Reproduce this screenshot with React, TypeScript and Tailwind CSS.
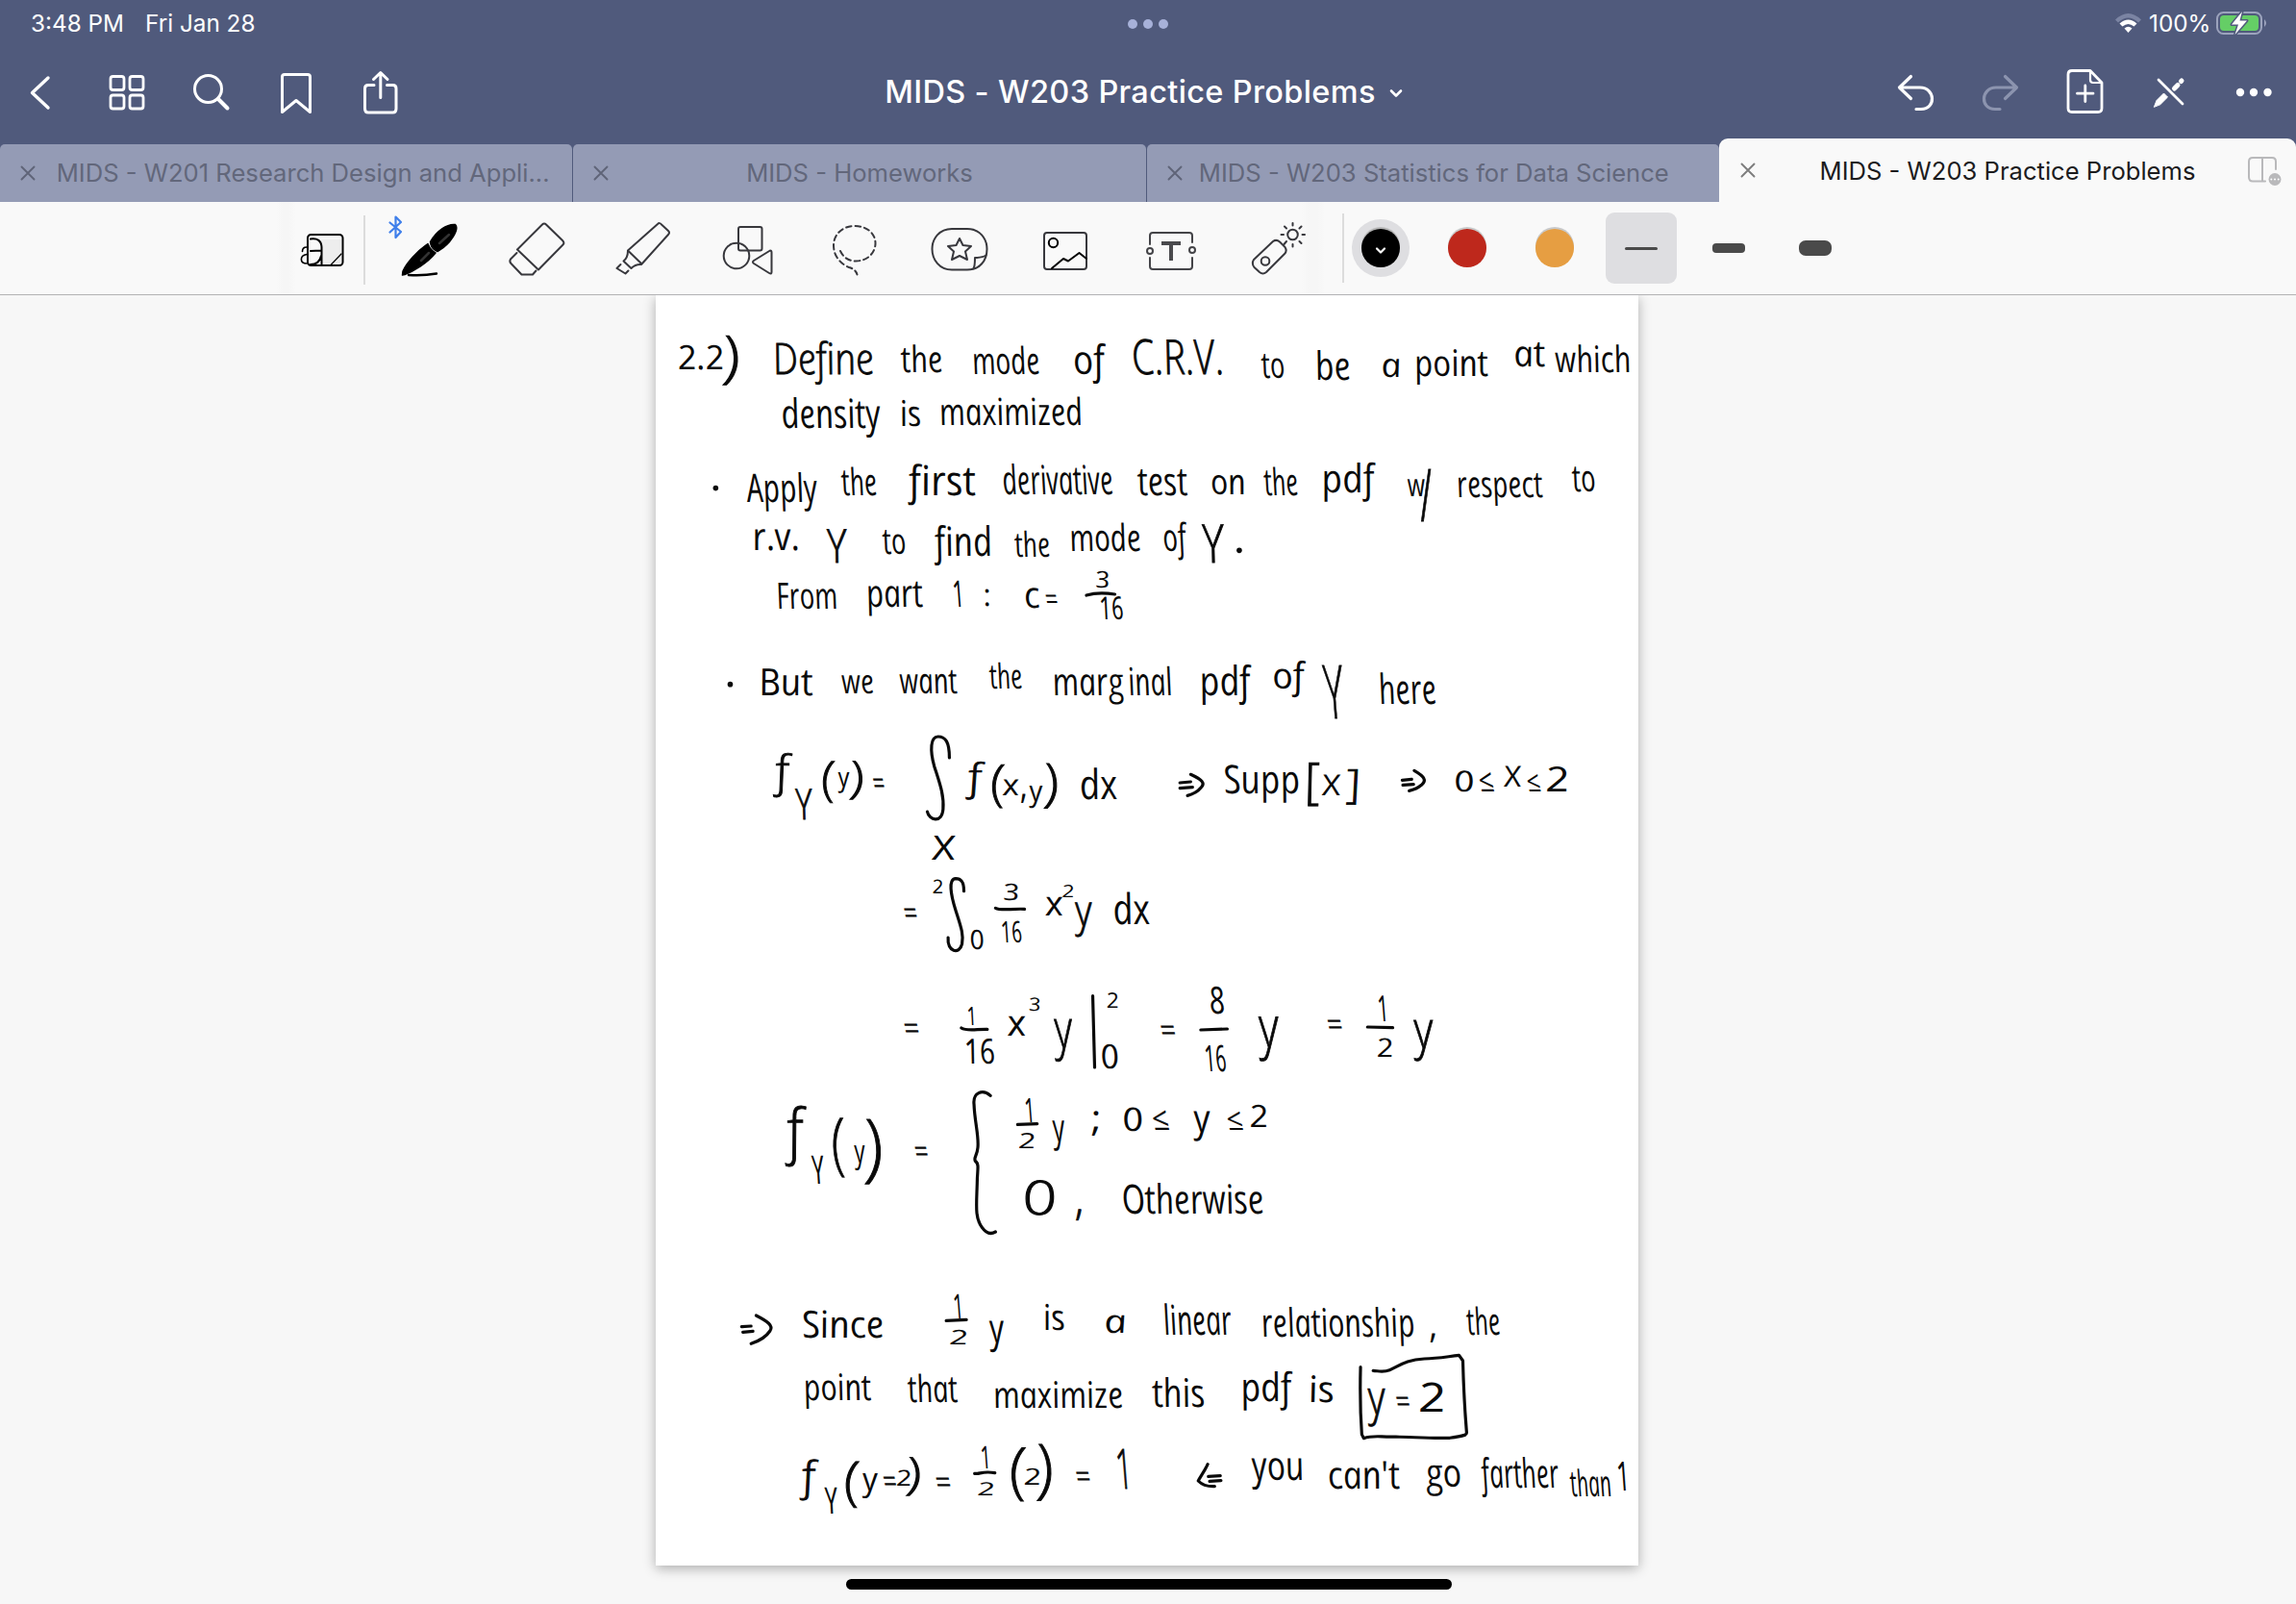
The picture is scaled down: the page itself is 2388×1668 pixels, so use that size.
import React from "react";

/* ---------- handwritten note ---------- */

// Ink is stored strip by strip. Inside a strip, 1568 units span 1030px across
// and 3 units make one pixel down.
const UX = 1030 / 1568;
const UY = 1 / 3;
const SHEET_X = 680;

// text, left, right, baseline, font size (px)
type Word = [string, number, number, number, number];
// text, left, right, top, bottom: stretched to fill the given height
type Tall = [string, number, number, number, number];

interface Strip {
  top: number;
  words: Word[];
  tall: Tall[];
  strokes: string[];
  dots: number[][];
}

const strips: Strip[] = [
  {
    top: 310,
    words: [
      ["2.2", 38, 112, 222, 35], ["Define", 190, 350, 238, 45], ["the", 392, 458, 232, 38],
      ["mode", 505, 612, 238, 39], ["of", 665, 715, 237, 42], ["C.R.V.", 758, 904, 238, 50],
      ["to", 963, 1000, 250, 38], ["be", 1048, 1104, 254, 41], ["a", 1152, 1184, 246, 35],
      ["point", 1205, 1322, 243, 38], ["at", 1362, 1412, 214, 38], ["which", 1428, 1548, 230, 38],
      ["density", 203, 360, 405, 42], ["is", 390, 424, 400, 37], ["maximized", 453, 680, 397, 39],
      ["Apply", 148, 260, 635, 41], ["the", 298, 354, 614, 39], ["first", 405, 511, 614, 43],
      ["derivative", 553, 728, 612, 42], ["test", 767, 846, 614, 41], ["on", 882, 938, 612, 37],
      ["the", 967, 1021, 614, 39], ["pdf", 1058, 1142, 606, 41], ["w", 1194, 1222, 618, 33],
      ["respect", 1272, 1408, 621, 38], ["to", 1455, 1492, 602, 39],
      ["r.v.", 157, 232, 785, 40], ["to", 363, 400, 797, 38], ["find", 446, 537, 803, 42],
      ["the", 572, 628, 808, 36], ["mode", 659, 772, 790, 39], ["of", 807, 844, 790, 40],
      ["From", 195, 292, 969, 38], ["part", 337, 427, 963, 40], [":", 522, 534, 960, 32],
      ["c", 587, 612, 965, 38], ["=", 620, 640, 972, 32], ["3", 698, 722, 902, 24],
      ["16", 706, 744, 1003, 33],
    ],
    tall: [
      [")", 112, 140, 118, 272], ["/", 1216, 1238, 535, 697], ["Y", 276, 307, 720, 824],
      ["Y", 871, 905, 705, 824], ["1", 474, 492, 880, 962],
    ],
    strokes: ["M685 927 C700 918 718 920 730 924"],
    dots: [[98, 593], [927, 787]],
  },
  {
    top: 660,
    words: [
      ["But", 167, 253, 190, 39], ["we", 298, 349, 182, 35], ["want", 390, 481, 182, 37],
      ["the", 532, 584, 168, 36], ["marg", 632, 745, 188, 40], ["inal", 752, 822, 188, 40],
      ["pdf", 865, 946, 189, 42], ["of", 980, 1031, 168, 38], ["here", 1149, 1240, 216, 43],
      ["=", 347, 366, 499, 34], [",", 580, 592, 510, 38], ["x", 552, 579, 500, 31],
      ["dx", 675, 735, 514, 43], ["Supp", 903, 1024, 495, 41], ["X", 1058, 1087, 500, 30],
      ["0", 1267, 1299, 488, 30], ["≤", 1306, 1330, 490, 33], ["X", 1346, 1373, 473, 30],
      ["≤", 1382, 1404, 490, 30], ["2", 1412, 1450, 490, 36], ["X", 441, 477, 702, 35],
      ["=", 396, 418, 902, 34], ["2", 440, 458, 808, 20], ["0", 500, 523, 980, 28],
      ["3", 552, 579, 828, 24], ["16", 550, 583, 960, 31], ["x", 620, 649, 875, 36],
      ["2", 645, 665, 820, 18], ["dx", 728, 787, 902, 44],
    ],
    tall: [
      ["Y", 1066, 1097, 97, 262], ["f", 194, 216, 370, 508], ["Y", 226, 252, 480, 575],
      ["(", 266, 288, 395, 525], ["y", 292, 310, 430, 495], [")", 312, 335, 395, 515],
      ["f", 499, 520, 397, 515], ["(", 534, 557, 405, 540], ["y", 595, 616, 470, 540],
      [")", 620, 644, 400, 540], ["[", 1032, 1056, 400, 535], ["]", 1098, 1120, 420, 530],
      ["y", 669, 695, 835, 942],
    ],
    strokes: [
      "M468 384 C468 335 462 318 450 318 C438 318 437 360 444 410 C452 460 460 500 458 545 C456 590 436 580 433 552",
      "M491 800 C491 770 486 761 478 761 C466 762 470 810 478 860 C486 910 491 935 488 965 C484 1000 464 990 466 945",
      "M833 462 L850 459 M833 479 L853 476 M850 436 C868 452 874 464 866 478 C862 488 853 498 845 502",
      "M1185 454 L1200 451 M1186 469 L1203 467 M1204 424 C1220 442 1224 454 1216 468 C1210 478 1203 484 1196 487",
      "M541 853 C550 862 566 854 587 856",
    ],
    dots: [[121, 155]],
  },
  {
    top: 1000,
    words: [
      ["=", 396, 421, 244, 34], ["x", 560, 590, 230, 38], ["3", 592, 612, 153, 19],
      ["16", 492, 541, 318, 36], ["2", 716, 736, 143, 22], ["0", 708, 737, 333, 35],
      ["=", 802, 827, 248, 34], ["8", 880, 905, 163, 39], ["16", 873, 907, 342, 38],
      ["=", 1066, 1091, 232, 34], ["2", 1144, 1171, 297, 27], ["=", 413, 435, 626, 34],
      ["2", 576, 604, 582, 22], [";", 693, 709, 528, 38], ["0", 742, 775, 528, 34],
      ["≤", 789, 816, 525, 34], ["≤", 907, 933, 524, 32], ["2", 943, 973, 517, 32],
      ["0", 585, 639, 790, 49], [",", 668, 682, 790, 46], ["Otherwise", 742, 967, 785, 42],
    ],
    tall: [
      ["1", 496, 511, 140, 197], ["y", 637, 665, 178, 310], ["y", 961, 992, 172, 310],
      ["1", 1147, 1164, 107, 187], ["y", 1206, 1236, 183, 310], ["f", 214, 240, 450, 640],
      ["Y", 252, 271, 605, 693], ["(", 284, 306, 487, 672], ["y", 318, 335, 572, 650],
      [")", 337, 368, 493, 695], ["1", 588, 604, 425, 500], ["y", 633, 652, 495, 590],
      ["y", 856, 882, 467, 560],
    ],
    strokes: [
      "M487 207 C495 218 512 210 528 211",
      "M695 107 L698 330",
      "M866 213 L908 210",
      "M1130 204 L1170 206",
      "M576 508 L607 506",
      "M533 418 C520 395 505 410 507 445 C508 500 515 545 513 580 C512 605 506 612 509 622 C516 632 512 650 512 690 C511 760 508 800 520 830 C527 850 535 850 541 843",
    ],
    dots: [],
  },
  {
    top: 1300,
    words: [
      ["Since", 235, 365, 274, 39], ["2", 467, 497, 293, 21], ["is", 617, 652, 250, 37],
      ["a", 713, 749, 259, 34], ["linear", 808, 916, 265, 43], ["relationship", 963, 1206, 270, 41],
      [",", 1228, 1241, 274, 38], ["the", 1288, 1341, 263, 39], ["point", 238, 345, 467, 38],
      ["that", 403, 482, 473, 39], ["maximize", 538, 744, 491, 38], ["this", 790, 874, 489, 41],
      ["pdf", 930, 1011, 472, 41], ["is", 1037, 1078, 473, 38], ["=", 1175, 1198, 508, 34],
      ["2", 1211, 1255, 505, 42], ["=", 363, 385, 755, 34], ["2", 383, 408, 736, 23],
      ["=", 446, 471, 760, 34], ["2", 511, 539, 765, 19], ["2", 585, 613, 732, 24],
      ["=", 668, 692, 740, 34], ["you", 948, 1031, 718, 42], ["can't", 1068, 1182, 745, 40],
      ["go", 1223, 1280, 738, 41], ["farther", 1312, 1434, 740, 42], ["than", 1452, 1517, 767, 38],
    ],
    tall: [
      ["1", 475, 491, 137, 213], ["y", 533, 556, 220, 318], ["y", 1133, 1160, 430, 548],
      ["f", 236, 257, 652, 780], ["Y", 272, 292, 740, 822], ["(", 302, 327, 658, 802],
      ["y", 331, 355, 695, 773], [")", 402, 426, 645, 765], ["1", 518, 534, 610, 680],
      ["(", 565, 592, 615, 782], [")", 609, 637, 605, 782], ["1", 734, 760, 622, 745],
      ["1", 1526, 1546, 660, 750],
    ],
    strokes: [
      "M139 239 L154 237 M141 256 L157 253 M162 204 C180 222 190 236 184 252 C178 270 166 284 154 292",
      "M463 220 L495 217",
      "M508 697 C516 700 520 688 540 695",
      "M877 668 C872 690 865 708 862 720 C868 732 876 738 888 737 M878 706 L897 704 M880 721 L898 719",
      "M1119 365 C1118 440 1119 520 1121 575 L1124 587 C1140 576 1150 584 1175 582 C1210 584 1230 588 1260 586 C1280 580 1287 578 1287 570 C1284 500 1282 420 1281 345 L1275 328 C1250 334 1240 338 1220 339 C1190 342 1180 362 1165 374 C1155 382 1148 377 1139 376",
    ],
    dots: [],
  },
];

const PEN = "'Open Sans', 'Noto Sans', 'DejaVu Sans', sans-serif";

// Height above and below the baseline, in em, of characters that get stretched.
function extent(ch: string): [number, number] {
  if (ch === "y") return [0.535, 0.24];
  if (ch === "f") return [0.77, 0.24];
  if ("()[]".includes(ch)) return [0.714, 0.16];
  return [0.714, 0];
}

function Written({ text, x, width, y, size }: { text: string; x: number; width: number; y: number; size: number }) {
  // Large and stretched marks use the light face, thickened to the pen's width.
  const light = size > 44 || text === "f" || text === "]" || text === "[";
  return (
    <text
      transform={`translate(${(x + 1.5).toFixed(1)} ${y.toFixed(1)}) skewX(11)`}
      fontSize={size}
      fontWeight={light ? 300 : 400}
      stroke={light ? "#0a0a0a" : "none"}
      strokeWidth={0.9}
      textLength={width}
      lengthAdjust="spacingAndGlyphs"
    >
      {text}
    </text>
  );
}

function Note() {
  return (
    <svg
      viewBox="682 308 1022 1320"
      className="block h-[1320px] w-[1022px] overflow-visible italic"
      fontFamily={PEN}
      fill="#0a0a0a"
    >
      {strips.map((s) => (
        <g key={s.top}>
          {s.words.map(([t, l, r, b, size], i) => (
            <Written key={i} text={t} x={SHEET_X + l * UX} width={(r - l) * UX} y={s.top + b * UY} size={size} />
          ))}
          {s.tall.map(([t, l, r, top, bottom], i) => {
            const [up, down] = extent(t);
            const size = ((bottom - top) * UY) / (up + down);
            return (
              <Written
                key={i}
                text={t}
                x={SHEET_X + l * UX}
                width={(r - l) * UX}
                y={s.top + bottom * UY - down * size}
                size={size}
              />
            );
          })}
          <g transform={`translate(${SHEET_X} ${s.top}) scale(${UX} ${UY})`}>
            {s.strokes.map((d, i) => (
              <path
                key={i}
                d={d}
                fill="none"
                stroke="#0a0a0a"
                strokeWidth={3.2}
                strokeLinecap="round"
                strokeLinejoin="round"
                vectorEffect="non-scaling-stroke"
              />
            ))}
          </g>
          {s.dots.map(([x, y], i) => (
            <circle key={i} cx={SHEET_X + x * UX} cy={s.top + y * UY} r={2.8} />
          ))}
        </g>
      ))}
    </svg>
  );
}

/* ---------- chrome ---------- */

// An icon slot. Every drawing shares the screen's coordinate grid.
function Slot({
  x, y, w, h, className, children, stroke = "#fff", sw = 3,
}: {
  x: number; y: number; w: number; h: number; className?: string; children: React.ReactNode; stroke?: string; sw?: number;
}) {
  return (
    <svg
      width={w}
      height={h}
      viewBox={`${x} ${y} ${w} ${h}`}
      className={`block shrink-0 ${className ?? ""}`}
      fill="none"
      stroke={stroke}
      strokeWidth={sw}
      strokeLinecap="round"
      strokeLinejoin="round"
    >
      {children}
    </svg>
  );
}

function StatusBar() {
  return (
    <div className="flex h-12 items-center justify-between pl-[32px] pr-[28px] text-[24.3px] leading-none text-white">
      <div className="flex w-[598px] gap-[22px]">
        <span>3:48 PM</span>
        <span>Fri Jan 28</span>
      </div>
      <div className="flex gap-[6px] pt-[2px]">
        <span className="size-[10px] rounded-full bg-[#a7b1d9]" />
        <span className="size-[10px] rounded-full bg-[#a7b1d9]" />
        <span className="size-[10px] rounded-full bg-[#a7b1d9]" />
      </div>
      <div className="flex w-[602px] items-center justify-end">
        <Slot x={2198} y={10} w={34} h={28} stroke="none">
          <path d="M2200 20.5 Q2213.500 7.500 2227 20.500 L2224 23.500 Q2213.500 13.500 2203 23.500Z" fill="#7b84a3" />
          <path d="M2204.500 24.500 Q2213.500 16.500 2222.500 24.500 L2219.500 27.500 Q2213.500 22.500 2207.500 27.500Z" fill="#fff" />
          <path d="M2209.500 29.500 Q2213.500 26 2217.500 29.500 L2213.500 34Z" fill="#fff" />
        </Slot>
        <span className="w-[69px] pl-[3px]">100%</span>
        <Slot x={2301} y={8} w={59} h={32}>
          <rect x="2306" y="13" width="46" height="22" rx="6.500" stroke="#9ca3bd" strokeWidth="2" />
          <rect x="2309" y="16" width="40" height="16" rx="4" fill="#65ce66" stroke="none" />
          <path d="M2355 20 Q2359 24 2355 28Z" fill="#9ca3bd" stroke="none" />
          <path d="M2332 12 L2321 25.500 H2328 L2324.500 36 L2337 21.500 H2329.500Z" fill="#fff" stroke="#505a7c" strokeWidth="3" paintOrder="stroke" />
        </Slot>
      </div>
    </div>
  );
}

function NavBar() {
  return (
    <div className="flex h-24 items-center justify-between">
      <div className="flex w-[893px]">
        <Slot x={0} y={48} w={88} h={96} sw={3.4}>
          <path d="M50 81 L33.500 96.500 L50 112" />
        </Slot>
        <Slot x={88} y={48} w={88} h={96} sw={2.8}>
          <rect x="115" y="79.500" width="14" height="14" rx="2.500" />
          <rect x="135" y="79.500" width="14" height="14" rx="2.500" />
          <rect x="115" y="99" width="14" height="14" rx="2.500" />
          <rect x="135" y="99" width="14" height="14" rx="2.500" />
        </Slot>
        <Slot x={176} y={48} w={88} h={96} sw={3}>
          <circle cx="216.500" cy="92.500" r="14" />
          <path d="M227 103 L236.500 112.500" strokeWidth="4" />
        </Slot>
        <Slot x={264} y={48} w={88} h={96} sw={3}>
          <path d="M293.500 116.500 V80 Q293.500 77.500 296 77.500 H320 Q322.500 77.500 322.500 80 V116.500 L308 104.500Z" />
        </Slot>
        <Slot x={352} y={48} w={88} h={96} sw={3}>
          <path d="M389 88.500 H383 Q379.500 88.500 379.500 92 V113 Q379.500 117 383 117 H408.500 Q412 117 412 113 V92 Q412 88.500 408.500 88.500 H402.500" />
          <path d="M395.800 101.500 V77 M388.500 82.500 L395.800 75.500 L403 82.500" />
        </Slot>
      </div>
      <div className="flex shrink-0 items-center gap-[12px] pt-px">
        <h1 className="whitespace-nowrap text-[32.5px] font-medium leading-none tracking-[0.35px] text-white">
          MIDS - W203 Practice Problems
        </h1>
        <Slot x={1444} y={88} w={18} h={16} sw={2.6}>
          <path d="M1448 93.500 L1453 98.500 L1458 93.500" />
        </Slot>
      </div>
      <div className="flex w-[900px] justify-end">
        <Slot x={1948} y={48} w={88} h={96} sw={3.2}>
          <path d="M1987.500 79.500 L1975.500 91 L1987.500 102.500 M1976 91 H1997 C2013 91 2014 113.500 1998 113.500 H1993" />
        </Slot>
        <Slot x={2036} y={48} w={88} h={96} sw={3.2} stroke="#8c94af">
          <path d="M2085.500 79.500 L2097.500 91 L2085.500 102.500 M2097 91 H2076 C2060 91 2059 113.500 2075 113.500 H2080" />
        </Slot>
        <Slot x={2124} y={48} w={88} h={96} sw={2.8}>
          <path d="M2155 73.500 H2174 L2186 86 V112.500 Q2186 116.500 2182 116.500 H2155 Q2151 116.500 2151 112.500 V77.500 Q2151 73.500 2155 73.500Z" />
          <path d="M2174 74 V83 Q2174 86 2177 86 H2186" strokeWidth="2.200" />
          <path d="M2168.800 89 V105.500 M2160.500 97.200 H2177" />
        </Slot>
        <Slot x={2212} y={48} w={88} h={96} sw={2.8}>
          <path d="M2245 83 L2270 108" />
          <path d="M2240.500 111 L2243 104.500 L2250.500 97 L2254.500 101 L2247 108.500Z" fill="#fff" strokeWidth="1" />
          <path d="M2261.500 92 L2265 88.500 M2268.500 84.500 L2269 84" strokeWidth="5" />
        </Slot>
        <Slot x={2300} y={48} w={88} h={96} stroke="none">
          <circle cx="2330" cy="96" r="4.200" fill="#fff" />
          <circle cx="2344" cy="96" r="4.200" fill="#fff" />
          <circle cx="2358.500" cy="96" r="4.200" fill="#fff" />
        </Slot>
      </div>
    </div>
  );
}

function Close({ color }: { color: string }) {
  return (
    <Slot x={0} y={0} w={16} h={16} stroke={color} sw={1.9}>
      <path d="M1.500 1.500 L14.500 14.500 M14.500 1.500 L1.500 14.500" />
    </Slot>
  );
}

function Tab({ title, className }: { title: string; className: string }) {
  return (
    <div className="flex h-[60px] min-w-0 flex-1 items-center rounded-t-[5px] bg-[#949bb5] pl-[21px]">
      <Close color="#5f6478" />
      <span className={`flex-1 whitespace-nowrap text-center text-[25.6px] text-[#62677b] ${className}`}>
        {title}
      </span>
    </div>
  );
}

function Tabs() {
  return (
    <div className="flex h-[66px] items-end">
      <div className="flex w-[1788px] gap-px">
        <Tab title="MIDS - W201 Research Design and Appli..." className="pr-[2px]" />
        <Tab title="MIDS - Homeworks" className="pr-[37px]" />
        <Tab title="MIDS - W203 Statistics for Data Science" className="pr-[35px]" />
      </div>
      <div className="flex h-[66px] flex-1 items-center rounded-t-[9px] bg-[#f9f9f9] pl-[22px]">
        <Close color="#7d7d7d" />
        <span className="flex-1 whitespace-nowrap pl-[18px] pt-[2px] text-center text-[25.6px] text-[#1c1c1e]">
          MIDS - W203 Practice Problems
        </span>
        <Slot x={2332} y={150} w={56} h={54} stroke="#b9b9bb" sw={2}>
          <path d="M2367 176 V168 Q2367 164 2363 164 H2343 Q2339 164 2339 168 V184 Q2339 188.500 2343 188.500 H2356" />
          <path d="M2353 164 V188" />
          <circle cx="2366" cy="186.500" r="6.500" fill="#b9b9bb" stroke="none" />
          <path d="M2362.300 186.500 h.01 M2366 186.500 h.01 M2369.700 186.500 h.01" stroke="#fff" />
        </Slot>
      </div>
    </div>
  );
}

const INK = "#38383d";

function Tool({ x, children, sw = 2 }: { x: number; children: React.ReactNode; sw?: number }) {
  return (
    <Slot x={x} y={210} w={110} h={96} stroke={INK} sw={sw}>
      {children}
    </Slot>
  );
}

function Swatch({ className }: { className: string }) {
  return <span className={`block size-10 rounded-full shadow-[0_-2px_0_#c9c9c9] ${className}`} />;
}

function Toolbar() {
  return (
    <div className="flex h-[97px] border-b border-[#b2b2b4] bg-[#f9f9f9]">
      <div className="flex h-24 w-[378px] bg-[linear-gradient(90deg,#f9f9f9_288px,#f6f6f6_294px,#f6f6f6_300px,#f9f9f9_308px)] pl-[292px]">
        <Slot x={292} y={210} w={86} h={96} stroke="#000" sw={2}>
          <rect x="334" y="249" width="21" height="27" fill="#ededed" stroke="none" />
          <rect x="320" y="244" width="36.500" height="32" rx="3.500" />
          <path d="M323 248.500 Q334 247 334.500 257 V276 M323 261 L334 260.500 M334 266 Q332 275 323 275" />
          <path d="M355 264 L344 275.500" strokeWidth="1.200" />
          <path d="M319 257 Q314.500 257 314.500 261.500 M319 264.500 C311.500 266 311.500 273.500 319 274" strokeWidth="1.600" />
        </Slot>
      </div>
      <span className="mt-[14px] h-[72px] w-[2px] bg-[#dcdcdc]" />
      <div className="flex w-[1016px] bg-[linear-gradient(90deg,#f9f9f9_974px,#f6f6f6_982px,#f6f6f6_990px,#f9f9f9_998px)] pl-[12px]">
        <Tool x={392}>
          <path d="M405.500 231.500 L417 241 L411.500 247 V225.500 L417 231 L405.500 241.500" stroke="#3f7fea" strokeWidth="2.200" />
          <path d="M447.500 251.500 C454 240 465 232.500 473.500 233.500 C478 238 469 254 455 261.500 C451 260 448 256 447.500 251.500Z" fill="#000" stroke="#000" strokeWidth="1.500" />
          <path d="M445 253.500 C446.500 257.500 449.500 261 453 263 C444 274 430 282 421 285.500 L418.500 286 L419 282 C423 273 434 261 445 253.500Z" fill="#000" stroke="#000" strokeWidth="1.500" />
          <path d="M457 253 L467 244 M438 271 L446 263" stroke="#333" strokeWidth="2.500" />
          <path d="M425 286 Q440 287 454 284.500" stroke="#000" strokeWidth="2.400" />
        </Tool>
        <Tool x={502}>
          <path d="M538 259.500 L564 233.500 Q566 231.500 568 233.500 L585 250 Q587.500 252.500 585.500 254.500 L560 280.500Z" />
          <path d="M537.500 263 L531 269.500 Q529.500 272 531.500 274 L542.500 285.500 H554 L557.500 281.500" />
        </Tool>
        <Tool x={612}>
          <path d="M653 260.500 L684 233 Q686 231 688 233.500 L695 240 Q697 242 695 244 L667.500 274.500Z" />
          <path d="M653 261 Q653 268 648.500 271.500 L656.500 279 Q661 274.500 667 275" />
          <path d="M645.500 275 L641.500 279 L650.500 284.500 L653.500 281.500" />
        </Tool>
        <Tool x={722}>
          <rect x="768" y="236" width="24.500" height="24.500" rx="2" />
          <circle cx="766" cy="266" r="13.300" />
          <path d="M801 260.500 Q802.500 260.500 802.500 262.500 V283 Q802.500 285.500 800 284 L784 274 Q782 272.500 784 271Z" />
        </Tool>
        <Tool x={832}>
          <g strokeDasharray="5.500 4">
            <path d="M874 261 Q879 271.500 890 271.500 C902 271.500 910.500 263 910.500 253 C910.500 243 902 235 889 235 C876 235 867 244 867 255 C867 268 876 275 883 278 Q890 280 891.500 285.500" />
          </g>
        </Tool>
        <Tool x={942}>
          <path d="M990 238 H1006 C1019 238 1026.500 248 1026.500 259 C1026.500 271 1019 280.500 1006 280.500 H990 C977 280.500 969.500 270 969.500 259 C969.500 248 977 238 990 238Z" />
          <path d="M1012.500 279 Q1014 277 1014 268 Q1022 268 1025.500 265.500" />
          <path d="M998 248 L1001.500 255 L1010 256 L1004 261.500 L1006 270 L998 266 L990 270 L992 261.500 L986 256 L994.500 255Z" />
        </Tool>
        <Tool x={1052}>
          <rect x="1086" y="242" width="44" height="38" rx="3" />
          <circle cx="1095.500" cy="252.500" r="4.700" stroke="#000" />
          <path d="M1094 279 L1106 269 L1111 271.500 L1122.500 263 L1130 269" stroke="#000" />
        </Tool>
        <Tool x={1162}>
          <g stroke="#444448">
            <path d="M1196 254 V245 Q1196 242 1199 242 H1237 Q1240 242 1240 245 V252 M1240 268 V277 Q1240 280 1237 280 H1199 Q1196 280 1196 277 V268" />
            <circle cx="1196" cy="261" r="3" />
            <circle cx="1240" cy="260" r="3" />
          </g>
          <path d="M1208 253 H1228 M1218 253 V271" stroke="#4a4a4d" strokeWidth="4" strokeLinecap="butt" />
        </Tool>
        <Tool x={1272}>
          <path d="M1304 270 L1324 251 Q1327.500 248.500 1331 251.500 L1336.500 257 Q1339 261 1336 264 L1317 283 Q1313.500 286 1310 283 L1304.500 278 Q1301.500 274 1304 270Z" />
          <circle cx="1316" cy="271.500" r="4.300" />
          <circle cx="1344.500" cy="244" r="5.300" />
          <path d="M1344.500 232 V234.500 M1344.500 254 V256.500 M1332.500 244 H1335 M1354.500 244 H1357 M1336 235.500 L1338 237.500 M1351.500 251 L1353.500 253 M1353.500 235.500 L1351.500 237.500 M1335.500 254 L1338 251" />
        </Tool>
      </div>
      <span className="mt-[12px] h-[72px] w-[2px] bg-[#dcdcdc]" />
      <div className="flex h-24 items-center">
        <span className="ml-[8px] flex size-[60px] items-center justify-center rounded-full bg-[#dedee1]">
          <span className="flex size-10 items-center justify-center rounded-full bg-black shadow-[0_-2px_0_#b5b5b5]">
            <Slot x={0} y={0} w={12} h={9} sw={2.2} className="mt-[4px]">
              <path d="M2 2.500 L6 6.500 L10 2.500" />
            </Slot>
          </span>
        </span>
        <Swatch className="ml-[40px] bg-[#be281c]" />
        <Swatch className="ml-[51px] bg-[#e69e42]" />
        <span className="ml-[33px] flex h-[74px] w-[74px] items-center justify-center rounded-[9px] bg-[#dedee1]">
          <span className="h-[3px] w-[34px] rounded-full bg-[#4a4a4a]" />
        </span>
        <span className="ml-[37px] h-[10px] w-[34px] rounded-[4px] bg-[#4a4a4a]" />
        <span className="ml-[56px] h-[16px] w-[34px] rounded-[7px] bg-[#4a4a4a]" />
      </div>
    </div>
  );
}

export default function App() {
  return (
    <div className="flex h-[1668px] w-[2388px] flex-col overflow-hidden bg-[#f7f7f7] font-['Inter','Liberation_Sans',sans-serif]">
      <header className="bg-[#505a7c]">
        <StatusBar />
        <NavBar />
        <Tabs />
      </header>
      <Toolbar />
      <main className="flex flex-1 flex-col items-center pr-[2px]">
        <div className="bg-white pt-px shadow-[0_3px_12px_rgba(0,0,0,0.3)] [clip-path:inset(0_-20px_-30px_-20px)]">
          <Note />
        </div>
        <div className="mt-[14px] ml-[3px] h-[11px] w-[630px] rounded-full bg-black" />
      </main>
    </div>
  );
}
